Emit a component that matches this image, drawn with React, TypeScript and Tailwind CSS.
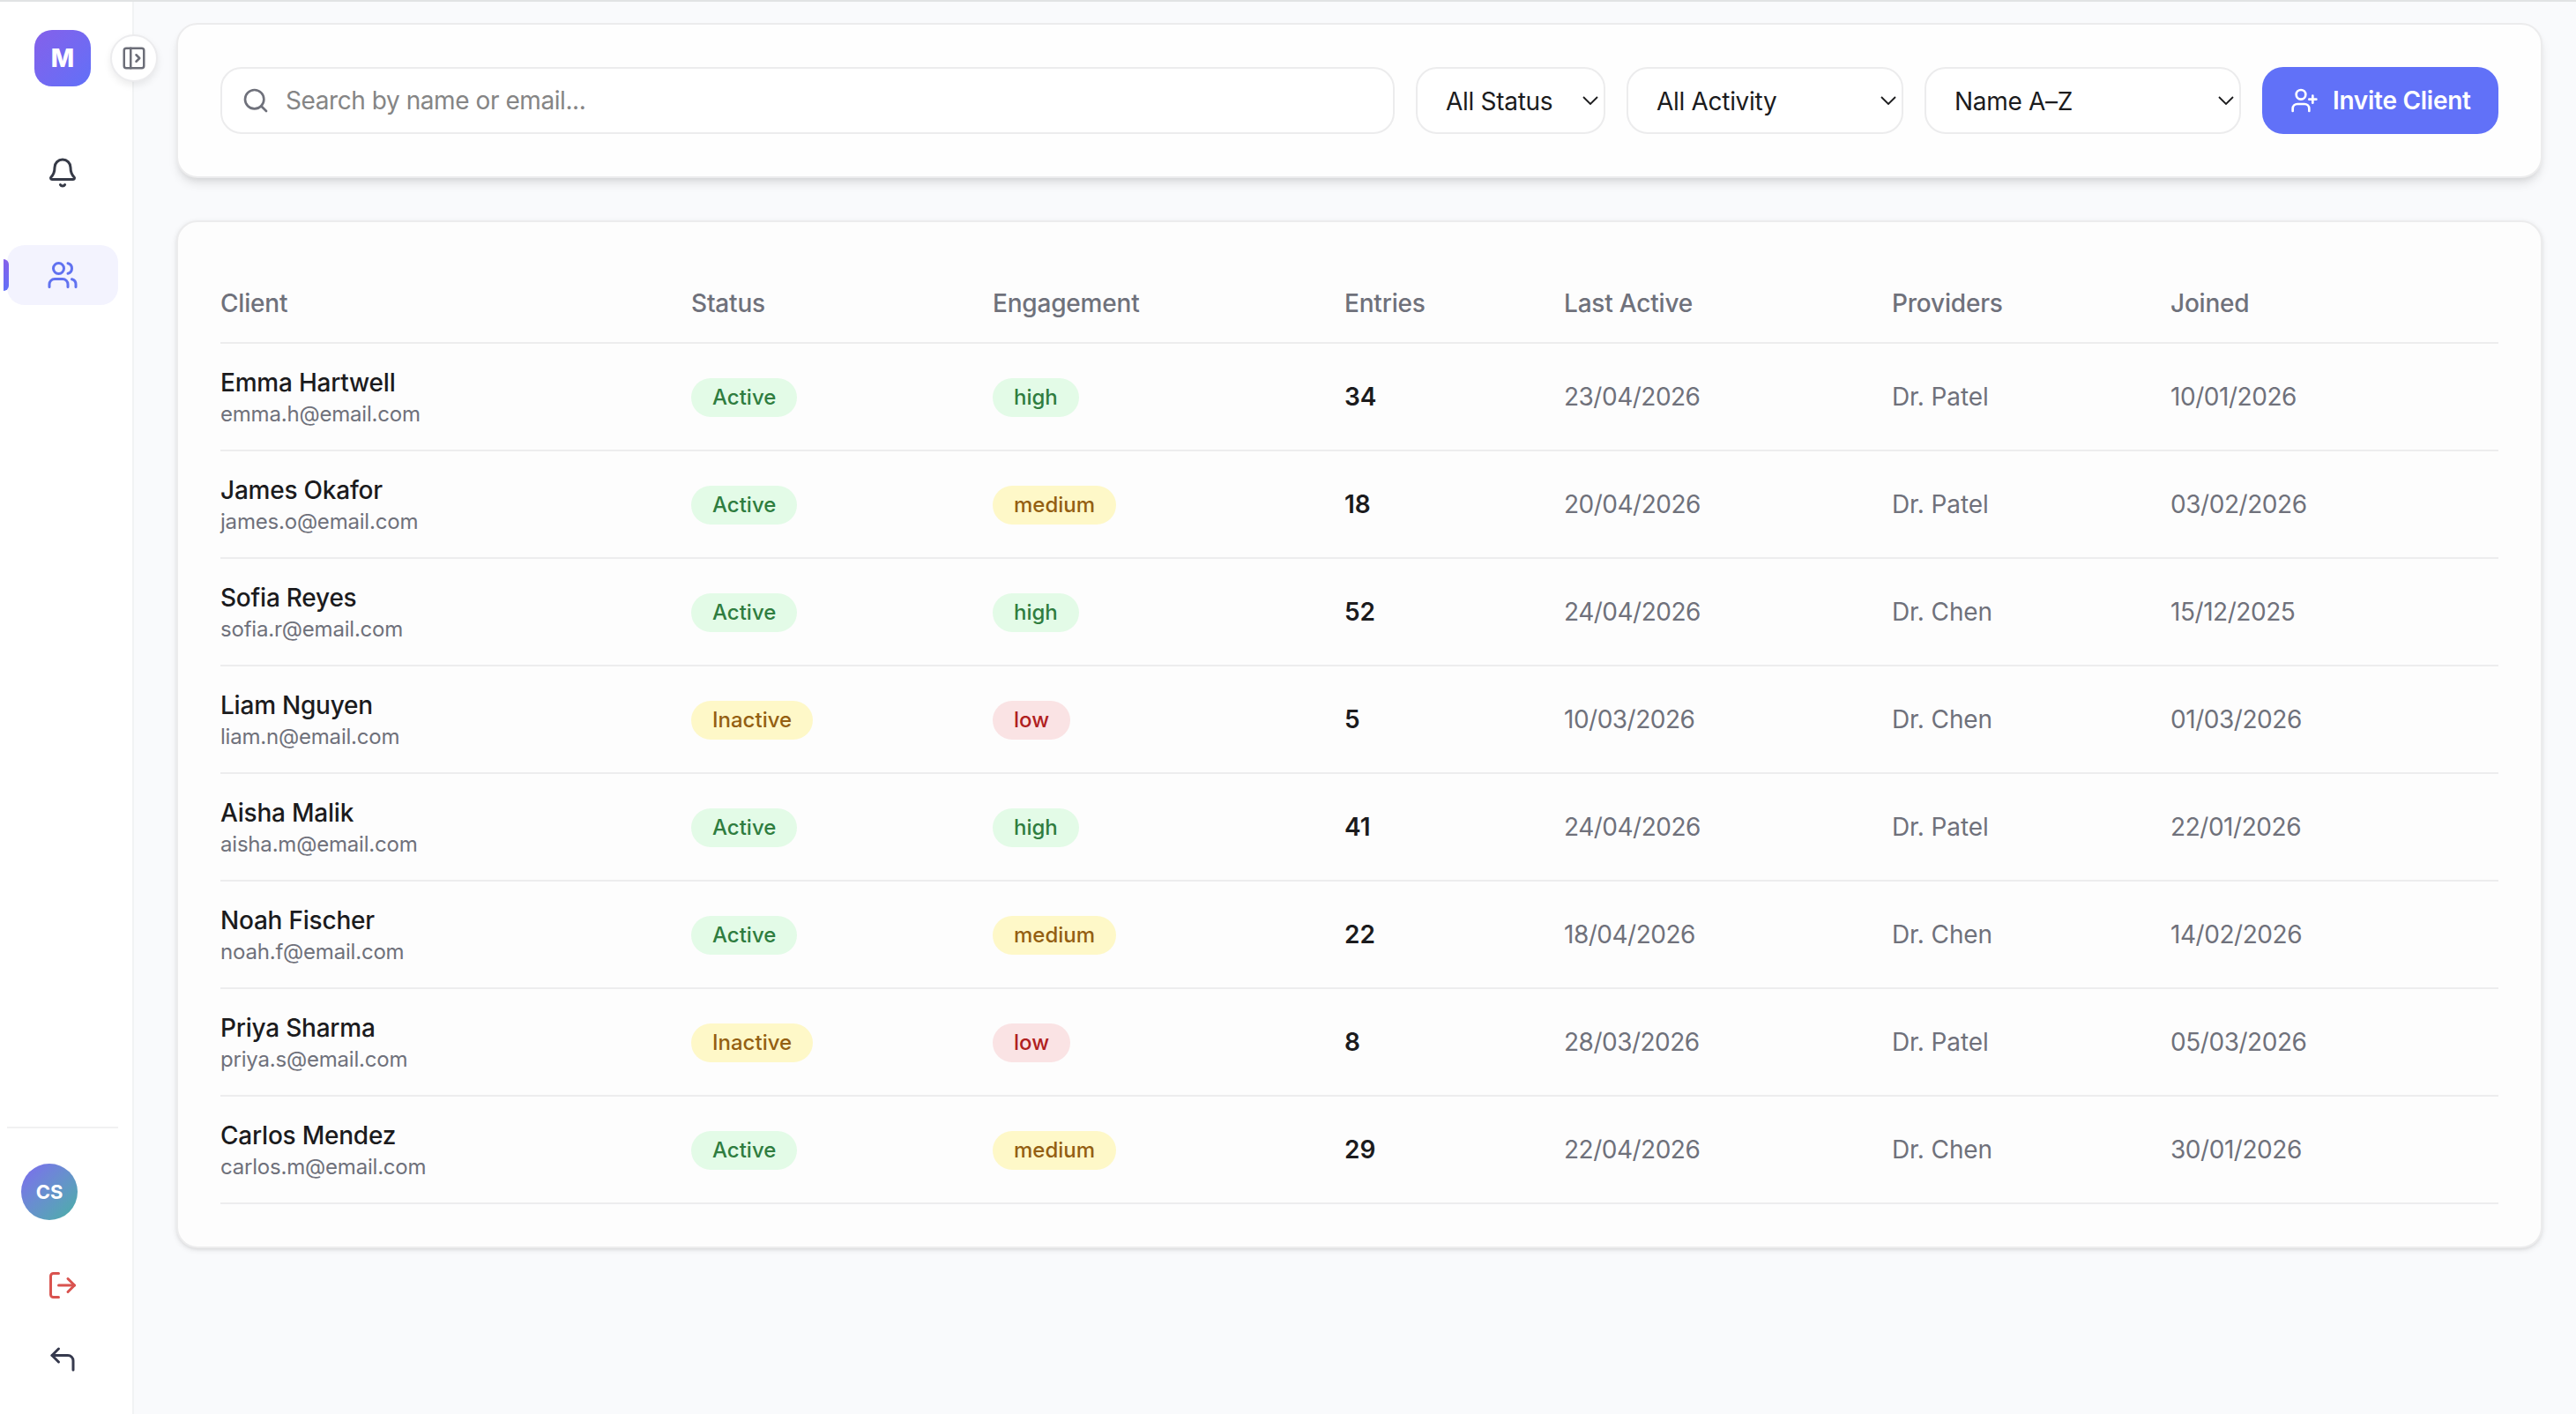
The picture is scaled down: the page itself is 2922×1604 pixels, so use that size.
import {
  Bell,
  CornerUpLeft,
  LogOut,
  PanelLeftOpen,
  Search,
  UserPlus,
  Users,
} from "lucide-react";
import clsx from "clsx";

type Level = "high" | "medium" | "low";

interface Client {
  name: string;
  email: string;
  status: "Active" | "Inactive";
  engagement: Level;
  entries: number;
  lastActive: string;
  provider: string;
  joined: string;
}

const clients: Client[] = [
  { name: "Emma Hartwell", email: "emma.h@email.com", status: "Active", engagement: "high", entries: 34, lastActive: "23/04/2026", provider: "Dr. Patel", joined: "10/01/2026" },
  { name: "James Okafor", email: "james.o@email.com", status: "Active", engagement: "medium", entries: 18, lastActive: "20/04/2026", provider: "Dr. Patel", joined: "03/02/2026" },
  { name: "Sofia Reyes", email: "sofia.r@email.com", status: "Active", engagement: "high", entries: 52, lastActive: "24/04/2026", provider: "Dr. Chen", joined: "15/12/2025" },
  { name: "Liam Nguyen", email: "liam.n@email.com", status: "Inactive", engagement: "low", entries: 5, lastActive: "10/03/2026", provider: "Dr. Chen", joined: "01/03/2026" },
  { name: "Aisha Malik", email: "aisha.m@email.com", status: "Active", engagement: "high", entries: 41, lastActive: "24/04/2026", provider: "Dr. Patel", joined: "22/01/2026" },
  { name: "Noah Fischer", email: "noah.f@email.com", status: "Active", engagement: "medium", entries: 22, lastActive: "18/04/2026", provider: "Dr. Chen", joined: "14/02/2026" },
  { name: "Priya Sharma", email: "priya.s@email.com", status: "Inactive", engagement: "low", entries: 8, lastActive: "28/03/2026", provider: "Dr. Patel", joined: "05/03/2026" },
  { name: "Carlos Mendez", email: "carlos.m@email.com", status: "Active", engagement: "medium", entries: 29, lastActive: "22/04/2026", provider: "Dr. Chen", joined: "30/01/2026" },
];

const columns = [
  "Client",
  "Status",
  "Engagement",
  "Entries",
  "Last Active",
  "Providers",
  "Joined",
];

const badgeColors = {
  Active: "bg-[#e3fbe7] text-[#2f7d3f]",
  high: "bg-[#e3fbe7] text-[#2f7d3f]",
  Inactive: "bg-[#fef8c8] text-[#945f12]",
  medium: "bg-[#fef8c8] text-[#945f12]",
  low: "bg-[#fae3e4] text-[#b02020]",
};

const rowGrid =
  "grid grid-cols-[534px_342px_399px_249px_372px_316px_1fr] items-center border-b-2 border-[#ededee]";

function Badge({ label }: { label: keyof typeof badgeColors }) {
  return (
    <span
      className={clsx(
        "inline-flex h-11 items-center rounded-full px-6 text-[24px] font-medium",
        badgeColors[label]
      )}
    >
      {label}
    </span>
  );
}

function FilterSelect({ label, className }: { label: string; className: string }) {
  return (
    <div className={clsx("relative h-19 shrink-0", className)}>
      <select className="h-full w-full appearance-none rounded-[24px] border-2 border-[#ececed] bg-white pt-0.5 pl-8 text-[28px] tracking-[-0.3px] text-[#1b1b1d]">
        <option>{label}</option>
      </select>
      <svg
        viewBox="0 0 18 10"
        className="pointer-events-none absolute top-[33px] right-2 h-2.5 w-[18px]"
        fill="none"
        stroke="#1b1b1d"
        strokeWidth="1.8"
      >
        <path d="M1 1l8 8 8-8" />
      </svg>
    </div>
  );
}

function Sidebar() {
  return (
    <aside className="relative flex w-[152px] shrink-0 flex-col border-r-2 border-[#f1f3f4] bg-white pt-8 pb-7 pl-2">
      <div className="ml-[31px] flex h-16 w-16 items-center justify-center rounded-[20px] bg-linear-to-br from-[#8460ea] to-[#6070f8] text-[28px] font-extrabold text-white">
        M
      </div>
      <button className="absolute top-[37px] left-[125px] z-10 flex h-[54px] w-[54px] items-center justify-center rounded-full border-2 border-[#ececee] bg-white text-[#6c6e78] shadow-[0_4px_8px_rgba(0,0,0,0.08)]">
        <PanelLeftOpen size={30} strokeWidth={2} />
      </button>

      <nav className="mt-16 flex w-[126px] flex-col gap-12">
        <a className="flex h-17 items-center justify-center text-[#363a47]">
          <Bell size={36} strokeWidth={2} />
        </a>
        <a className="relative flex h-17 items-center justify-center rounded-[20px] bg-[#f3f3fe] text-[#6172f0]">
          <span className="absolute top-4 -left-1 h-9 w-1.5 rounded-r-md bg-linear-to-b from-[#8460ea] to-[#6070f8]" />
          <Users size={36} strokeWidth={2} />
        </a>
      </nav>

      <div className="mt-auto flex w-[126px] flex-col border-t-2 border-[#f1f1f2] pt-10">
        <div className="ml-4 flex h-16 w-16 items-center justify-center rounded-full bg-linear-135 from-[#7c68f0] to-[#46b0a4] text-[22px] font-bold text-white">
          CS
        </div>
        <button className="mt-10 flex h-17 items-center justify-center text-[#d9534f]">
          <LogOut size={36} strokeWidth={2} />
        </button>
        <button className="mt-4 flex h-17 items-center justify-center text-[#363a4e]">
          <CornerUpLeft size={36} strokeWidth={2} />
        </button>
      </div>
    </aside>
  );
}

function Toolbar() {
  return (
    <section className="flex h-44 gap-6 rounded-[24px] border-2 border-[#ececed] bg-[#fefefe] p-12 shadow-[0_8px_12px_-2px_rgba(0,0,0,0.1),0_4px_8px_-4px_rgba(0,0,0,0.1)]">
      <label className="flex h-19 flex-1 items-center gap-[18px] rounded-[24px] border-2 border-[#ececed] bg-white pl-[22px]">
        <Search size={32} strokeWidth={2} className="text-[#6f717b]" />
        <input
          className="flex-1 text-[28px] tracking-[-0.43px] outline-none placeholder:text-[#858585]"
          placeholder="Search by name or email..."
        />
      </label>
      <FilterSelect label="All Status" className="w-[215px]" />
      <FilterSelect label="All Activity" className="w-[314px]" />
      <FilterSelect label="Name A–Z" className="w-[359px]" />
      <button className="flex h-19 w-[268px] shrink-0 items-center gap-4 rounded-[24px] bg-[#6171f8] pl-8 text-[28px] font-semibold tracking-[-0.28px] whitespace-nowrap text-white">
        <UserPlus size={32} strokeWidth={2} />
        Invite Client
      </button>
    </section>
  );
}

function ClientTable() {
  return (
    <section className="mt-12 rounded-[24px] border-2 border-[#ececed] bg-[#fdfdfd] p-12 shadow-[0_2px_6px_rgba(0,0,0,0.1),0_2px_4px_-2px_rgba(0,0,0,0.1)]">
      <div
        className={clsx(
          rowGrid,
          "h-[90px] text-[28px] font-medium tracking-[-0.2px] text-[#6f717b]"
        )}
      >
        {columns.map((column) => (
          <div key={column}>{column}</div>
        ))}
      </div>
      {clients.map((client) => (
        <div key={client.email} className={clsx(rowGrid, "h-[122px] text-[28px] text-[#6f717b]")}>
          <div>
            <div className="leading-10 font-medium tracking-[-0.22px] text-[#1b1b1d]">
              {client.name}
            </div>
            <div className="text-[24px] leading-8 tracking-[-0.2px]">{client.email}</div>
          </div>
          <div className="flex pt-0.5">
            <Badge label={client.status} />
          </div>
          <div className="flex pt-0.5">
            <Badge label={client.engagement} />
          </div>
          <div className="font-semibold text-[#1b1b1d]">{client.entries}</div>
          <div className="tracking-[-0.5px]">{client.lastActive}</div>
          <div className="tracking-[-0.1px]">{client.provider}</div>
          <div className="tracking-[-0.45px]">{client.joined}</div>
        </div>
      ))}
    </section>
  );
}

export default function App() {
  return (
    <div className="flex h-[1604px] w-[2922px] overflow-hidden border-t-2 border-[#e1e3e4] bg-[#f9fafc] font-[Inter,sans-serif]">
      <Sidebar />
      <main className="flex-1 pt-6 pr-[38px] pl-12">
        <Toolbar />
        <ClientTable />
      </main>
    </div>
  );
}
